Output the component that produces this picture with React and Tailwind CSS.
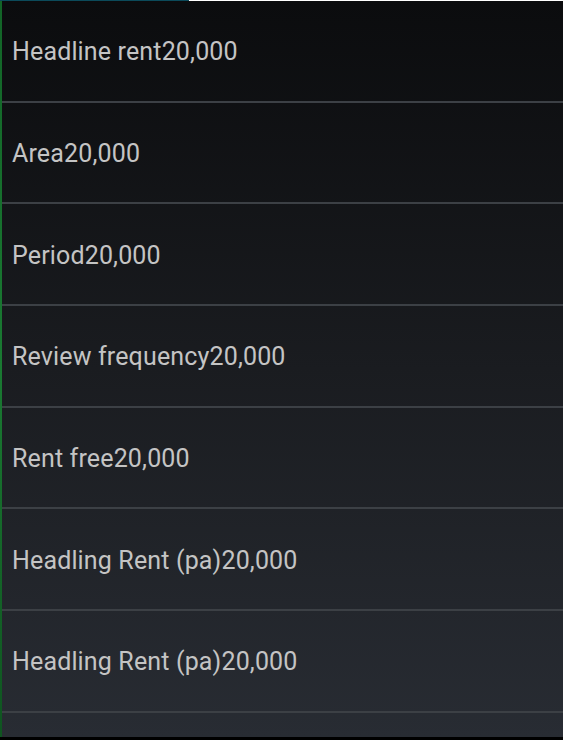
import React from 'react';

const rows = [
  { label: 'Headline rent', value: '20,000' },
  { label: 'Area', value: '20,000' },
  { label: 'Period', value: '20,000' },
  { label: 'Review frequency', value: '20,000' },
  { label: 'Rent free', value: '20,000' },
  { label: 'Headling Rent (pa)', value: '20,000' },
  { label: 'Headling Rent (pa)', value: '20,000' },
  { label: '', value: '' },
];

const App = () => {
  return (
    <div className="w-[563px] h-[740px] flex flex-col bg-black overflow-hidden" style={{ fontFamily: 'Roboto, "Noto Sans", sans-serif' }}>
      {/* status strip */}
      <div className="h-px flex shrink-0">
        <div className="w-[189px] bg-[#0b4a5a]" />
        <div className="flex-1 bg-white" />
      </div>

      <div className="flex-1 flex min-h-0">
        {/* wallpaper edge */}
        <div className="w-[2px] shrink-0 bg-gradient-to-b from-[#126427] via-[#1a7a32] to-[#0f5420]" />

        {/* list */}
        <div className="flex-1 flex flex-col overflow-hidden bg-gradient-to-b from-[#0b0c0e] via-[#1a1c20] to-[#282c33]">
          {rows.map((row, i) => (
            <React.Fragment key={i}>
              <div className="h-[99.67px] shrink-0 flex items-center pl-[10px] pt-[2px] text-[25px] leading-none tracking-[0.15px] text-[#c4c4c4]">
                {row.label}{row.value}
              </div>
              <div className="h-[2px] shrink-0 bg-[#3c4045]" />
            </React.Fragment>
          ))}
        </div>
      </div>

      <div className="h-[3px] shrink-0 bg-black" />
    </div>
  );
};

export default App;
